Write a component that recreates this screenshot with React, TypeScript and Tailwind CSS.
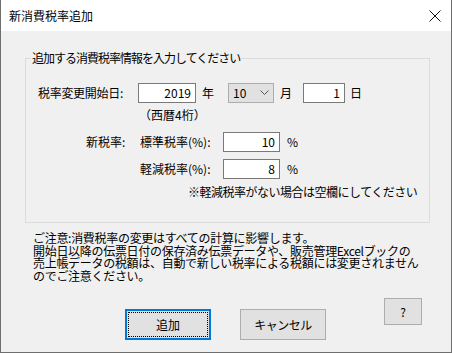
import React from "react";

const inputCls =
  "h-[20px] border border-[#7a7a7a] bg-white text-right pr-[4px] leading-[18px] text-black";

export default function App() {
  return (
    <div className="w-[452px] h-[353px] flex flex-col border-l border-r border-b border-[#6e6e6e] bg-[#f0f0f0] font-['Noto_Sans_CJK_JP',sans-serif] text-[12px] text-black overflow-hidden">
      {/* Title bar */}
      <div className="h-[31px] shrink-0 bg-white flex items-center">
        <span className="ml-[8px] leading-[16px]">新消費税率追加</span>
        <div className="ml-auto mr-[10px] w-[12px] h-[12px] flex items-center justify-center">
          <svg width="12" height="12" viewBox="0 0 12 12">
            <path d="M0.5 0.5 L11.5 11.5 M11.5 0.5 L0.5 11.5" stroke="#111" strokeWidth="1" />
          </svg>
        </div>
      </div>

      {/* Client */}
      <div className="flex-1 flex flex-col">
        {/* Group box */}
        <div className="ml-[24px] mt-[27px] w-[405px] h-[165px] border border-[#dcdcdc] flex flex-col">
          <span className="self-start -mt-[9px] ml-[5px] px-[1px] bg-[#f0f0f0] leading-[16px] tracking-[-1px]">
            追加する消費税率情報を入力してください
          </span>

          {/* Row 1 */}
          <div className="mt-[17px] flex items-center h-[20px] pl-[12px]">
            <span className="w-[100px] leading-[16px] tracking-[-0.3px]">税率変更開始日:</span>
            <div className={inputCls + " w-[58px]"}>2019</div>
            <span className="ml-[6px] leading-[16px]">年</span>
            <div className="ml-[14px] w-[46px] h-[20px] border border-[#adadad] bg-[#e1e1e1] flex items-center pl-[4px] pr-[4px]">
              <span className="leading-[16px]">10</span>
              <svg className="ml-auto" width="9" height="6" viewBox="0 0 9 6">
                <path d="M0.5 0.5 L4.5 4.5 L8.5 0.5" fill="none" stroke="#555" strokeWidth="1" />
              </svg>
            </div>
            <span className="ml-[6px] leading-[16px]">月</span>
            <div className={inputCls + " ml-[11px] w-[42px]"}>1</div>
            <span className="ml-[5px] leading-[16px]">日</span>
          </div>

          {/* Row 2 */}
          <div className="mt-[4px] pl-[113px] leading-[16px]">（西暦4桁）</div>

          {/* Row 3 */}
          <div className="mt-[9px] flex items-center h-[20px]">
            <span className="ml-[60px] w-[54px] leading-[16px]">新税率:</span>
            <span className="w-[83px] leading-[16px]">標準税率(%):</span>
            <div className={inputCls + " w-[57px]"}>10</div>
            <span className="ml-[7px] leading-[16px]">%</span>
          </div>

          {/* Row 4 */}
          <div className="mt-[7px] flex items-center h-[20px]">
            <span className="ml-[114px] w-[83px] leading-[16px]">軽減税率(%):</span>
            <div className={inputCls + " w-[57px]"}>8</div>
            <span className="ml-[7px] leading-[16px]">%</span>
          </div>

          {/* Row 5 */}
          <div className="mt-[5px] pl-[162px] leading-[16px] tracking-[-0.5px]">
            ※軽減税率がない場合は空欄にしてください
          </div>
        </div>

        {/* Notice */}
        <div className="ml-[32px] mt-[9px] leading-[12.5px] tracking-[-0.3px]">
          <div>ご注意:消費税率の変更はすべての計算に影響します。</div>
          <div>開始日以降の伝票日付の保存済み伝票データや、販売管理Excelブックの</div>
          <div>売上帳データの税額は、自動で新しい税率による税額には変更されません</div>
          <div>のでご注意ください。</div>
        </div>

        {/* Buttons */}
        <div className="flex items-start mt-[16px]">
          <div className="ml-[124px] mt-[11px] w-[86px] h-[31px] border-2 border-[#0078d7] bg-[#e1e1e1] p-[1px]">
            <div className="w-full h-full border border-dotted border-black flex items-center justify-center leading-[16px]">
              追加
            </div>
          </div>
          <div className="ml-[29px] mt-[11px] w-[86px] h-[31px] border border-[#adadad] bg-[#e1e1e1] flex items-center justify-center leading-[16px] tracking-[-0.5px]">
            キャンセル
          </div>
          <div className="ml-[58px] w-[38px] h-[27px] border border-[#adadad] bg-[#e1e1e1] flex items-center justify-center leading-[16px]">
            ?
          </div>
        </div>
      </div>
    </div>
  );
}
